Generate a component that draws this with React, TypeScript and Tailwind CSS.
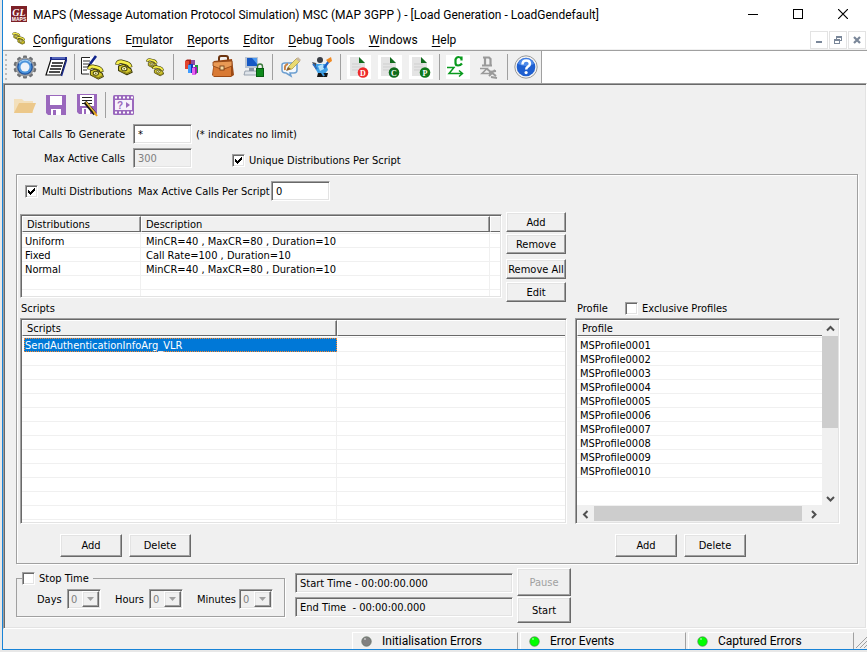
import type { ReactNode } from "react";

const sunken =
  "border border-t-[#a0a0a0] border-l-[#a0a0a0] border-r-white border-b-white shadow-[inset_1px_1px_0_#696969,inset_-1px_-1px_0_#e3e3e3]";
const raised =
  "border border-t-white border-l-white border-r-[#696969] border-b-[#696969] bg-[#f0f0f0] shadow-[inset_-1px_-1px_0_#a0a0a0,inset_1px_1px_0_#e3e3e3]";
const etched =
  "border border-[#a0a0a0] shadow-[1px_1px_0_#fff,inset_1px_1px_0_#fff]";

/* ---------- basic controls ---------- */

function PushButton({ className, disabled, children }: { className: string; disabled?: boolean; children: ReactNode }) {
  return (
    <button
      type="button"
      disabled={disabled}
      className={`${raised} flex items-center justify-center whitespace-nowrap disabled:text-[#a0a0a0] ${className}`}
    >
      {children}
    </button>
  );
}

function CheckBox({ label, checked }: { label: string; checked?: boolean }) {
  return (
    <label className="flex items-center gap-1 whitespace-nowrap">
      <span className="relative block h-[13px] w-[13px]">
        <input
          type="checkbox"
          defaultChecked={checked}
          className={`${sunken} peer block h-[13px] w-[13px] appearance-none bg-white`}
        />
        <svg
          viewBox="0 0 13 13"
          className="pointer-events-none absolute inset-0 hidden h-[13px] w-[13px] peer-checked:block"
          fill="#000"
          shapeRendering="crispEdges"
        >
          <path d="M3 5h1v1h1v1h1v-1h1v-1h1v-1h1v-1h1v3h-1v1h-1v1h-1v1h-1v1h-1v-1h-1v-1h-1z" />
        </svg>
      </span>
      {label}
    </label>
  );
}

function TimeSelect({ label, width }: { label: string; width: string }) {
  return (
    <label className="flex items-center">
      <span className={width}>{label}</span>
      <span className={`${sunken} relative block h-[20px] w-[34px]`}>
        <select disabled className="block h-[18px] w-full appearance-none pl-[3px] text-[#808080] opacity-100">
          <option>0</option>
        </select>
        <span className={`${raised} pointer-events-none absolute top-px right-px flex h-[16px] w-[17px] items-center justify-center`}>
          <svg viewBox="0 0 7 4" className="h-[4px] w-[7px]" fill="#a0a0a0">
            <path d="M0 0h7L3.500 4z" />
          </svg>
        </span>
      </span>
    </label>
  );
}

/* ---------- icons ---------- */

function Phone({ x = 0, y = 0, s = 1 }: { x?: number; y?: number; s?: number }) {
  return (
    <g transform={`translate(${x} ${y}) scale(${s})`} strokeLinejoin="round">
      <path d="M4 8l6-2 8 5 1.500 4-6 3L4 13z" fill="#d3c72c" stroke="#3a370a" strokeWidth="1.200" />
      <path d="M6 13.500l7.500 3 5-2.500" stroke="#8a8018" strokeWidth="1.500" />
      <path d="M2.500 6.500Q3 2.800 7 3l6 1.500q4 1.200 4.500 5" stroke="#3f3c0c" strokeWidth="4.800" />
      <path d="M2.500 6Q3 2.800 7 3l6 1.500q4 1.200 4.500 4.500" stroke="#f6ee4a" strokeWidth="3" />
      <ellipse cx="10.500" cy="11" rx="3.200" ry="2.400" fill="#fffcc0" stroke="#4a470e" strokeWidth="1.200" />
      <circle cx="10.500" cy="11" r=".9" fill="#4a470e" />
    </g>
  );
}

function Svg({ w, h, children }: { w: number; h: number; children: ReactNode }) {
  return (
    <svg width={w} height={h} viewBox={`0 0 ${w} ${h}`} fill="none" aria-hidden="true">
      {children}
    </svg>
  );
}

const GearIcon = () => (
  <Svg w={24} h={24}>
    {[0, 36, 72, 108, 144].map((a) => (
      <rect key={a} x="10" y="0.500" width="4" height="23" rx="1" fill="#6f7174" transform={`rotate(${a} 12 12)`} />
    ))}
    <circle cx="12" cy="12" r="9.500" fill="#9b9da0" />
    <circle cx="12" cy="12" r="7.800" fill="#1c4f9c" />
    <circle cx="12" cy="12" r="6.600" fill="#4a94dd" />
    <circle cx="12" cy="12" r="4.500" fill="#edf3f9" />
    <path d="M6 8.500a7 7 0 0 1 12 0" stroke="#9fd0f6" strokeWidth="1.200" />
  </Svg>
);

const NotebookIcon = () => (
  <Svg w={24} h={22}>
    <path d="M7 3h15l-5 16H2z" fill="#fff" stroke="#111" strokeWidth="1.200" />
    <path d="M6 1h17v3H6z" fill="#1b2a8c" />
    <path d="M8 2h13" stroke="#8ea0e8" />
    <path d="M8 7h11M7 10h11M6 13h11M5 16h11" stroke="#111" strokeWidth="1.300" />
    <path d="M22.500 4L17.500 20" stroke="#1b2a8c" strokeWidth="1.400" />
  </Svg>
);

const DocPhoneIcon = () => (
  <Svg w={25} h={25}>
    <path d="M1 2h14v17H1z" fill="#fff" />
    <path d="M1.500 19V2.500H10M1.500 19H9" stroke="#222" />
    <path d="M3 6h7M3 9h6M3 12h6M3 15h4" stroke="#333" strokeWidth="1.200" />
    <path d="M16 1l-6 8" stroke="#10248c" strokeWidth="2.600" />
    <path d="M10 9l-2 3" stroke="#000" strokeWidth="1.500" />
    <Phone x={7} y={9} s={0.84} />
  </Svg>
);

const PhoneIcon = () => (
  <Svg w={20} h={20}>
    <Phone x={1} y={2} s={0.88} />
  </Svg>
);

const PhonesIcon = () => (
  <Svg w={20} h={20}>
    <Phone x={1} y={1} s={0.58} />
    <Phone x={7} y={8} s={0.6} />
  </Svg>
);

const BarsIcon = () => (
  <Svg w={16} h={20}>
    <path d="M1 4l2-1.500h4V11H1z" fill="#a81f14" />
    <path d="M1 4h4v8H1z" fill="#e2452f" />
    <path d="M7 3h4v5H7z" fill="#8c4aa0" />
    <path d="M4 8l2-1h3v9H4z" fill="#1438c0" />
    <path d="M4 8h3v8H4z" fill="#3f9cff" />
    <path d="M11 8h3v8h-3z" fill="#1c9a3c" />
    <path d="M8 11l2-1h3v6l-2 2H8z" fill="#a01cb4" />
    <path d="M8 11h3v7H8z" fill="#e464f0" />
  </Svg>
);

const BriefcaseIcon = () => (
  <Svg w={24} h={24}>
    <path d="M8 6V3q0-2 2-2h5q2 0 2 2v3" stroke="#6b3410" strokeWidth="2" />
    <path d="M3 6l18-2 2 16-3 2H3L1 20z" fill="#9c4a15" />
    <path d="M3 7h17v14H2z" fill="#d97a34" />
    <path d="M2 7l19-1v5l-8 3h-3l-8-3z" fill="#e99a55" stroke="#8a4012" strokeWidth=".8" />
    <rect x="9" y="11" width="4" height="4" fill="#f6d9a0" stroke="#6b3410" strokeWidth=".8" />
  </Svg>
);

const MonitorLockIcon = () => (
  <Svg w={22} h={22}>
    <path d="M2 1h13v11H2z" fill="#b9c4d2" />
    <path d="M4 2h10v8H4z" fill="#1558c4" />
    <path d="M9 2h5v6z" fill="#4f9bf0" />
    <path d="M6 12h5v3H6z" fill="#8894a5" />
    <path d="M2 15h11l2 4H1z" fill="#dfe4ea" stroke="#8792a1" strokeWidth=".8" />
    <path d="M14.500 13v-2.500a2.500 2.500 0 0 1 5 0V13" stroke="#3c7a3c" strokeWidth="1.400" />
    <rect x="13.500" y="12.500" width="7" height="8" fill="#0e8a1c" stroke="#075c10" />
  </Svg>
);

const BubblePencilIcon = () => (
  <Svg w={22} h={22}>
    <path d="M2 9q0-2 3-2h9q3 0 3 2v5q0 3-3 3h-4l1 3-5-3q-4 0-4-3z" fill="#f3f8fd" stroke="#6d9fd0" strokeWidth="1.500" />
    <path d="M5 14q-1-5 3-6" stroke="#c98243" strokeWidth="2" />
    <path d="M7 14l2-4L17 2l3 3-8 8z" fill="#eadb72" stroke="#a99c4c" strokeWidth=".8" />
    <path d="M16 3l2-2 3 3-2 2z" fill="#c9b8a0" />
    <path d="M6 15l2-4 3 2z" fill="#8a5a2a" />
  </Svg>
);

const PainterIcon = () => (
  <Svg w={22} h={22}>
    <circle cx="9" cy="4" r="3" fill="#3a3e46" />
    <path d="M1 6l4 1 3 5-3 2z" fill="#4a4d55" />
    <path d="M5 8h10l2 6-4 5H8l-3-5z" fill="#3fa0e6" />
    <path d="M7 10l5-2 1 5-4 2z" fill="#b4e2fb" />
    <path d="M2 8l4 5" stroke="#2a6fc4" strokeWidth="2" />
    <path d="M7 17h10l-1 4H6z" fill="#141414" />
    <path d="M10 15l3 5" stroke="#3fa0e6" strokeWidth="2" />
    <path d="M13 12l5-7" stroke="#1f62c8" strokeWidth="2.200" />
    <path d="M15 4l5-3 1 4-3 2z" fill="#f08a24" />
  </Svg>
);

function ReportIcon({ letter, color }: { letter: string; color: string }) {
  return (
    <Svg w={24} h={24}>
      <rect width="24" height="24" fill="#fff" />
      <path d="M3 2h9l6 6v13H3z" fill="#e4e4e4" />
      <path d="M12 2l6 6h-6z" fill="#0f6b1c" />
      <path d="M5 9h9M5 12h9M5 15h6" stroke="#cfcfcf" />
      <circle cx="16" cy="17.500" r="5.300" fill={color} />
      <text x="16" y="20.500" fontSize="8" fontWeight="700" fill="#fff" textAnchor="middle" fontFamily="Liberation Serif, serif">
        {letter}
      </text>
    </Svg>
  );
}

const ConnectIcon = () => (
  <Svg w={24} h={24}>
    <rect width="24" height="24" fill="#fff" />
    <path d="M15.500 1.500v4M15.500 4q-1-2-3-2T9.500 4.500v3.500q0 2.500 2.500 2.500t4-2" stroke="#0a9a1e" strokeWidth="2.200" />
    <path d="M1 12.500h7L3 18.500h13M13 15.500l3.500 3-3.500 3" stroke="#0a9a1e" strokeWidth="1.500" />
  </Svg>
);

const DisconnectIcon = () => (
  <Svg w={22} h={24}>
    <path d="M5 2.500h6l1.500 1.500v6M7 2.500v8" stroke="#9a9a9a" strokeWidth="2.200" />
    <path d="M4 10.500h10" stroke="#9a9a9a" strokeWidth="2" />
    <path d="M2 13.500h7l-5 5h9" stroke="#9a9a9a" strokeWidth="1.600" />
    <path d="M9 14l9 7M17 15l-6 6M11 17l7-1M13 22l6 1" stroke="#9a9a9a" strokeWidth="2" />
  </Svg>
);

const HelpIcon = () => (
  <Svg w={24} h={24}>
    <circle cx="12" cy="12" r="11.200" fill="#f4f4f4" stroke="#9a9a9a" />
    <circle cx="12" cy="12" r="9.300" fill="#1f5fd0" />
    <path d="M4 9a8.500 8.500 0 0 1 16 0q-8 4-16 0z" fill="#4e8aea" />
    <path d="M8.500 9.500q0-4 3.700-4t3.700 3.200q0 1.800-2 2.900-1.700 1-1.700 2.900" stroke="#fff" strokeWidth="2.500" />
    <circle cx="12.100" cy="17.600" r="1.600" fill="#fff" />
  </Svg>
);

const FolderIcon = () => (
  <Svg w={24} h={20}>
    <path d="M1 18V4h8l2 2h9v12z" fill="#f3e0bc" />
    <path d="M6 8h17l-4 10H1z" fill="#ecc88a" />
  </Svg>
);

const SaveIcon = () => (
  <Svg w={22} h={22}>
    <path d="M1 1h20v20H3l-2-2z" fill="#9a68bd" />
    <path d="M5 2h12v9H5z" fill="#fff" />
    <path d="M6 15h10v6H6z" fill="#fff" />
    <path d="M8 16h3v5H8z" fill="#9a68bd" />
  </Svg>
);

const SaveEditIcon = () => (
  <Svg w={22} h={24}>
    <path d="M1 1h20v20H3l-2-2z" fill="#9a68bd" />
    <path d="M4 2h14v11H4z" fill="#fff" />
    <path d="M6 4.500h10M6 7.500h10M6 10.500h10" stroke="#222" />
    <path d="M6 15h8v6H6z" fill="#fff" />
    <path d="M8 16h2v5H8z" fill="#9a68bd" />
    <path d="M9 9l10 12" stroke="#1c1a14" strokeWidth="3.600" />
    <path d="M10 9l9 11" stroke="#e8bc3a" strokeWidth="1.500" />
    <path d="M18 19l3 4" stroke="#e8a21c" strokeWidth="2" />
  </Svg>
);

const FilmIcon = () => (
  <Svg w={23} h={22}>
    <rect x="1" y="1" width="21" height="20" rx="1.500" fill="#9a68bd" />
    <path d="M3 3.500h18M3 18.500h18" stroke="#fff" strokeWidth="2" strokeDasharray="2 2" />
    <rect x="3" y="6" width="17" height="10" fill="#f6f1fa" />
    <path d="M14 8l4 3-4 3z" fill="#9a68bd" />
    <text x="8" y="15" fontSize="10" fontWeight="700" fill="#9a68bd" textAnchor="middle" fontFamily="Liberation Sans, sans-serif">
      ?
    </text>
  </Svg>
);

/* ---------- toolbars ---------- */

function Tool({ name, children }: { name: string; children: ReactNode }) {
  return (
    <button type="button" aria-label={name} className="flex h-full w-[31px] items-center justify-center">
      {children}
    </button>
  );
}

const Divider = () => (
  <span className="flex h-[26px] w-[6px] justify-center">
    <span className="h-full w-px bg-[#a0a0a0]" />
  </span>
);

/* ---------- window parts ---------- */

function TitleBar() {
  return (
    <header className="flex h-[28px] items-center bg-white pr-px pl-2 text-[12px]">
      <svg width="16" height="16" viewBox="0 0 16 16" aria-hidden="true">
        <rect width="16" height="16" fill="#7d2027" />
        <text x="8" y="9.500" fontSize="10" fontWeight="700" fontStyle="italic" fill="#fff" textAnchor="middle" fontFamily="Liberation Serif, serif">
          GL
        </text>
        <text x="8" y="15" fontSize="5" fontWeight="700" fill="#fff" textAnchor="middle" fontFamily="Liberation Sans, sans-serif">
          MAPS
        </text>
      </svg>
      <h1 className="ml-[6px] pt-[2px] whitespace-nowrap">
        MAPS (Message Automation Protocol Simulation) MSC (MAP 3GPP ) - [Load Generation - LoadGendefault]
      </h1>
      <div className="ml-auto flex">
        <button type="button" aria-label="Minimize" className="flex h-[28px] w-[45px] items-center justify-center">
          <span className="h-px w-[10px] bg-black" />
        </button>
        <button type="button" aria-label="Maximize" className="flex h-[28px] w-[45px] items-center justify-center">
          <span className="h-[10px] w-[10px] border border-black" />
        </button>
        <button type="button" aria-label="Close" className="flex h-[28px] w-[46px] items-center justify-center">
          <svg width="10" height="10" viewBox="0 0 10 10" stroke="#000" strokeWidth="1.200">
            <path d="M0 0l10 10M10 0L0 10" />
          </svg>
        </button>
      </div>
    </header>
  );
}

const menus: [string, string, string][] = [
  ["", "C", "onfigurations"],
  ["E", "m", "ulator"],
  ["", "R", "eports"],
  ["", "E", "ditor"],
  ["", "D", "ebug Tools"],
  ["", "W", "indows"],
  ["", "H", "elp"],
];

function MenuBar() {
  return (
    <div className="flex h-[22px] items-end border-b border-[#f0f0f0] bg-white pr-px pl-[9px] text-[12px]">
      <svg width="13" height="13" viewBox="0 0 13 13" fill="none" aria-hidden="true" className="mb-1">
        <Phone x={0} y={0} s={0.42} />
        <Phone x={4} y={4} s={0.46} />
      </svg>
      <nav className="ml-2 flex gap-[14px]">
        {menus.map(([a, b, c]) => (
          <button type="button" key={b + c} className="h-[18px] whitespace-nowrap">
            {a}
            <span className="underline underline-offset-2">{b}</span>
            {c}
          </button>
        ))}
      </nav>
      <div className="ml-auto flex gap-px">
        <button type="button" aria-label="Minimize child" className="flex h-[18px] w-[18px] items-center justify-center border border-[#e3e3e3]">
          <span className="mt-1 h-[2px] w-[6px] bg-[#7a8799]" />
        </button>
        <button type="button" aria-label="Restore child" className="flex h-[18px] w-[18px] items-center justify-center border border-[#e3e3e3]">
          <svg width="8" height="8" viewBox="0 0 8 8" fill="#7a8799" fillRule="evenodd">
            <path d="M2 0h6v5H6V4h1V2H3v1H2zM0 3h6v5H0zM1 5v2h4V5z" />
          </svg>
        </button>
        <button type="button" aria-label="Close child" className="flex h-[18px] w-[18px] items-center justify-center border border-[#e3e3e3]">
          <svg width="8" height="8" viewBox="0 0 8 8" stroke="#7a8799" strokeWidth="2.200">
            <path d="M1 1l6 6M7 1L1 7" />
          </svg>
        </button>
      </div>
    </div>
  );
}

function MainToolbar() {
  return (
    <div className="flex h-[33px] border-t border-[#a0a0a0] bg-white">
      <div className="flex items-center border-r border-[#a0a0a0] bg-[#f0f0f0] pl-[2px]">
        <span className="mr-[2px] flex h-[26px] w-[2px] flex-col justify-between">
          {[0, 1, 2, 3, 4, 5].map((i) => (
            <span key={i} className="h-[2px] w-[2px] bg-[#bcbcbc]" />
          ))}
        </span>
        <Tool name="Settings"><GearIcon /></Tool>
        <Tool name="Script list"><NotebookIcon /></Tool>
        <Divider />
        <Tool name="Call script"><DocPhoneIcon /></Tool>
        <Tool name="Call"><PhoneIcon /></Tool>
        <Tool name="Calls"><PhonesIcon /></Tool>
        <Divider />
        <Tool name="Statistics"><BarsIcon /></Tool>
        <Tool name="Profiles"><BriefcaseIcon /></Tool>
        <Tool name="Secure host"><MonitorLockIcon /></Tool>
        <Divider />
        <Tool name="Edit message"><BubblePencilIcon /></Tool>
        <Tool name="Customize"><PainterIcon /></Tool>
        <Divider />
        <Tool name="D report"><ReportIcon letter="D" color="#ee2a2a" /></Tool>
        <Tool name="C report"><ReportIcon letter="C" color="#0f6b1c" /></Tool>
        <Tool name="P report"><ReportIcon letter="P" color="#0f7a1c" /></Tool>
        <Divider />
        <Tool name="Connect"><ConnectIcon /></Tool>
        <Tool name="Disconnect"><DisconnectIcon /></Tool>
        <Divider />
        <Tool name="Help"><HelpIcon /></Tool>
      </div>
    </div>
  );
}

/* ---------- list views ---------- */

const th = "h-[16px] border-t border-l border-t-white border-l-white bg-[#f0f0f0] p-0 pt-px pl-[4px] text-left font-normal leading-[13px]";
const thEnd = "border-r border-r-[#696969] shadow-[inset_-1px_0_0_#a0a0a0]";
const headLine = "border-b border-b-[#696969]";
const td = "h-[14px] border-b border-b-[#f0f0f0] p-0 pt-[2px] pl-[3px] leading-[11px] whitespace-nowrap";
const tdLine = "border-r border-r-[#f0f0f0]";

const distributions = [
  ["Uniform", "MinCR=40 , MaxCR=80 , Duration=10"],
  ["Fixed", "Call Rate=100 , Duration=10"],
  ["Normal", "MinCR=40 , MaxCR=80 , Duration=10"],
  ["", ""],
];

function DistributionTable() {
  return (
    <div className={`${sunken} mt-[2px] h-[84px] w-[482px] overflow-hidden p-px`}>
      <div className="h-full overflow-hidden bg-white">
        <table className="w-full table-fixed border-separate border-spacing-0">
          <colgroup>
            <col className="w-[119px]" />
            <col />
            <col className="w-[10px]" />
          </colgroup>
          <thead>
            <tr>
              <th scope="col" className={`${th} ${thEnd} ${headLine}`}>Distributions</th>
              <th scope="col" className={`${th} ${thEnd} ${headLine}`}>Description</th>
              <td className={`${th} ${headLine}`} />
            </tr>
          </thead>
          <tbody>
            <tr>
              <td className={`h-[2px] border-b border-b-[#f0f0f0] ${tdLine}`} />
              <td className={`h-[2px] border-b border-b-[#f0f0f0] ${tdLine}`} />
              <td className="h-[2px] border-b border-b-[#f0f0f0]" />
            </tr>
            {distributions.map(([name, text], i) => (
              <tr key={i}>
                <td className={`${td} ${tdLine}`}>{name}</td>
                <td className={`${td} ${tdLine}`}><span className="pl-[2px]">{text}</span></td>
                <td className={td} />
              </tr>
            ))}
            <tr>
              <td className={`h-[14px] ${tdLine}`} />
              <td className={`h-[14px] ${tdLine}`} />
              <td className="h-[14px]" />
            </tr>
          </tbody>
        </table>
      </div>
    </div>
  );
}

function ScriptTable() {
  const blanks = Array.from({ length: 13 }, (_, i) => i);
  return (
    <div className={`${sunken} h-[206px] overflow-hidden p-px`}>
      <div className="h-full overflow-hidden bg-white">
        <table className="w-full table-fixed border-separate border-spacing-0">
          <colgroup>
            <col className="w-[315px]" />
            <col />
          </colgroup>
          <thead>
            <tr>
              <th scope="col" className={`${th} ${thEnd} ${headLine}`}>Scripts</th>
              <td className={`${th} ${headLine}`} />
            </tr>
          </thead>
          <tbody>
            <tr>
              <td className={`h-[2px] border-b border-b-[#f0f0f0] ${tdLine}`} />
              <td className="h-[2px] border-b border-b-[#f0f0f0]" />
            </tr>
            <tr>
              <td className="h-[14px] p-0 pl-[2px]">
                <div className="h-[14px] border border-dotted border-[#ff8728] bg-[#0078d7] leading-[13px] text-white">
                  SendAuthenticationInfoArg_VLR
                </div>
              </td>
              <td className={td} />
            </tr>
            {blanks.map((i) => (
              <tr key={i}>
                <td className={`${td} ${tdLine}`} />
                <td className={td} />
              </tr>
            ))}
          </tbody>
        </table>
      </div>
    </div>
  );
}

const profiles = [
  "MSProfile0001",
  "MSProfile0002",
  "MSProfile0003",
  "MSProfile0004",
  "MSProfile0005",
  "MSProfile0006",
  "MSProfile0007",
  "MSProfile0008",
  "MSProfile0009",
  "MSProfile0010",
  "",
  "",
];

function Chevron({ d }: { d: string }) {
  return (
    <svg width="9" height="9" viewBox="0 0 9 9" fill="none" stroke="#505050" strokeWidth="2">
      <path d={d} />
    </svg>
  );
}

function ProfileTable() {
  return (
    <div className={`${sunken} h-[206px] p-px`}>
      <div className="flex h-full flex-col bg-[#f0f0f0]">
        <div className="flex min-h-0 flex-1">
          <div className="min-w-0 flex-1 overflow-hidden bg-white">
            <table className="w-full table-fixed border-separate border-spacing-0">
              <thead>
                <tr>
                  <th scope="col" className={`${th} ${headLine}`}>Profile</th>
                </tr>
              </thead>
              <tbody>
                <tr>
                  <td className="h-[2px] border-b border-b-[#f0f0f0]" />
                </tr>
                {profiles.map((p, i) => (
                  <tr key={i}>
                    <td className={td}>{p}</td>
                  </tr>
                ))}
              </tbody>
            </table>
          </div>
          <div className="flex w-[16px] flex-col">
            <button type="button" aria-label="Scroll up" className="flex h-[16px] items-center justify-center">
              <Chevron d="M1 6.500l3.500-3.500L8 6.500" />
            </button>
            <div className="flex-1">
              <div className="h-[92px] bg-[#cdcdcd]" />
            </div>
            <button type="button" aria-label="Scroll down" className="flex h-[16px] items-center justify-center">
              <Chevron d="M1 3l3.500 3.500L8 3" />
            </button>
          </div>
        </div>
        <div className="flex h-[16px] pr-[16px]">
          <button type="button" aria-label="Scroll left" className="flex w-[17px] items-center justify-center">
            <Chevron d="M6.500 1L3 4.500 6.500 8" />
          </button>
          <div className="flex-1 pr-[3px]">
            <div className="h-[15px] bg-[#cdcdcd]" />
          </div>
          <button type="button" aria-label="Scroll right" className="flex w-[17px] items-center justify-center">
            <Chevron d="M3 1l3.500 3.500L3 8" />
          </button>
        </div>
      </div>
    </div>
  );
}

function AddDelete() {
  return (
    <div className="mt-[10px] flex gap-[7px] pl-10">
      <PushButton className="h-[23px] w-[62px]">Add</PushButton>
      <PushButton className="h-[23px] w-[62px]">Delete</PushButton>
    </div>
  );
}

/* ---------- load generation form ---------- */

function LoadForm() {
  return (
    <main className={`${sunken} flex-1 bg-[#f0f0f0] p-px font-['DejaVu_Sans_Condensed','DejaVu_Sans',sans-serif] text-[11px] leading-[13px]`}>
      <div className="flex h-[39px] items-center pl-1">
        <Tool name="Open"><FolderIcon /></Tool>
        <Tool name="Save"><SaveIcon /></Tool>
        <Tool name="Save as"><SaveEditIcon /></Tool>
        <Divider />
        <Tool name="Run"><FilmIcon /></Tool>
      </div>

      <div className="flex items-center">
        <label htmlFor="total" className="w-[120px] text-right whitespace-nowrap">Total Calls To Generate</label>
        <input id="total" defaultValue="*" className={`${sunken} ml-2 h-[20px] w-[59px] bg-white px-[4px]`} />
        <span className="ml-1">(* indicates no limit)</span>
      </div>
      <div className="mt-1 flex items-center">
        <label htmlFor="active" className="w-[120px] text-right whitespace-nowrap">Max Active Calls</label>
        <input id="active" disabled defaultValue="300" className={`${sunken} ml-2 h-[20px] w-[59px] px-[4px] text-[#808080]`} />
        <div className="mt-1 ml-10">
          <CheckBox label="Unique Distributions Per Script" checked />
        </div>
      </div>

      <section className={`${etched} mt-[6px] mr-[7px] ml-[11px] pt-[6px] pb-[6px] pl-[3px]`}>
        <div className="flex items-center pl-[5px]">
          <div className="w-[113px]">
            <CheckBox label="Multi Distributions" checked />
          </div>
          <label htmlFor="per" className="w-[133px] whitespace-nowrap">Max Active Calls Per Script</label>
          <input id="per" defaultValue="0" className={`${sunken} h-[20px] w-[59px] bg-white px-[4px]`} />
        </div>

        <div className="mt-[11px] flex gap-1">
          <DistributionTable />
          <div className="flex flex-col gap-[5px]">
            <div className="flex flex-col gap-[2px]">
              <PushButton className="h-[20px] w-[60px]">Add</PushButton>
              <PushButton className="h-[20px] w-[60px]">Remove</PushButton>
            </div>
            <div className="flex flex-col gap-[3px]">
              <PushButton className="h-[20px] w-[60px]">Remove All</PushButton>
              <PushButton className="h-[20px] w-[60px]">Edit</PushButton>
            </div>
          </div>
        </div>

        <div className="mr-[17px] flex gap-2">
          <div className="min-w-0 flex-1">
            <h2 className="h-[16px] pl-px">Scripts</h2>
            <ScriptTable />
            <AddDelete />
          </div>
          <div className="w-[265px]">
            <div className="flex h-[16px] items-start pl-[2px]">
              <h2 className="w-[48px]">Profile</h2>
              <CheckBox label="Exclusive Profiles" />
            </div>
            <ProfileTable />
            <AddDelete />
          </div>
        </div>
      </section>

      <div className="mt-1 ml-[11px] flex items-start pb-1">
        <fieldset className="mt-1 h-[45px] w-[269px] border border-[#a0a0a0] shadow-[1px_1px_0_#fff]">
          <legend className="ml-[5px] pr-1">
            <CheckBox label="Stop Time" />
          </legend>
          <div className="flex items-center gap-[14px] pt-1 pl-5">
            <TimeSelect label="Days" width="w-[30px]" />
            <TimeSelect label="Hours" width="w-[34px]" />
            <TimeSelect label="Minutes" width="w-[42px]" />
          </div>
        </fieldset>
        <div className="ml-[10px] flex w-[218px] flex-col gap-1 pt-[5px]">
          <div className={`${sunken} h-[20px] pt-[3px] pl-[4px]`}>Start Time - 00:00:00.000</div>
          <div className={`${sunken} h-[20px] pt-[3px] pl-[4px] whitespace-pre`}>{"End Time  - 00:00:00.000"}</div>
        </div>
        <div className="ml-1 flex flex-col gap-px">
          <PushButton disabled className="h-[28px] w-[54px]">Pause</PushButton>
          <PushButton className="h-[26px] w-[54px]">Start</PushButton>
        </div>
      </div>
    </main>
  );
}

const statuses = [
  ["Initialisation Errors", "#808080"],
  ["Error Events", "#00ff00"],
  ["Captured Errors", "#00ff00"],
];

function StatusBar() {
  return (
    <footer className="flex h-[20px] justify-end gap-[2px] bg-[#f0f0f0] pt-[3px] text-[12px]">
      {statuses.map(([label, color]) => (
        <div key={label} className="flex w-[166px] items-center border-t border-r border-l border-t-white border-r-[#a0a0a0] border-l-white pl-2">
          <svg width="11" height="11" viewBox="0 0 11 11" aria-hidden="true">
            <circle cx="5.500" cy="5.500" r="4.800" fill={color} stroke="#5d6b5d" strokeWidth=".6" />
            <path d="M3 3h2" stroke="#fff" strokeWidth=".8" />
          </svg>
          <span className="ml-[10px] leading-[16px]">{label}</span>
        </div>
      ))}
      <svg width="11" height="17" viewBox="0 0 11 17" stroke="#a0a0a0" aria-hidden="true">
        <path d="M0 16L11 5M4 16l7-7M8 16l3-3" />
      </svg>
    </footer>
  );
}

export default function App() {
  return (
    <div className="flex min-h-screen flex-col bg-[#e8e8e8] pb-[2px] pl-[2px] font-[Roboto,sans-serif] text-black">
      <div className="flex flex-1 flex-col border-b border-l border-[#1883d7]">
        <TitleBar />
        <MenuBar />
        <MainToolbar />
        <LoadForm />
        <StatusBar />
      </div>
    </div>
  );
}
